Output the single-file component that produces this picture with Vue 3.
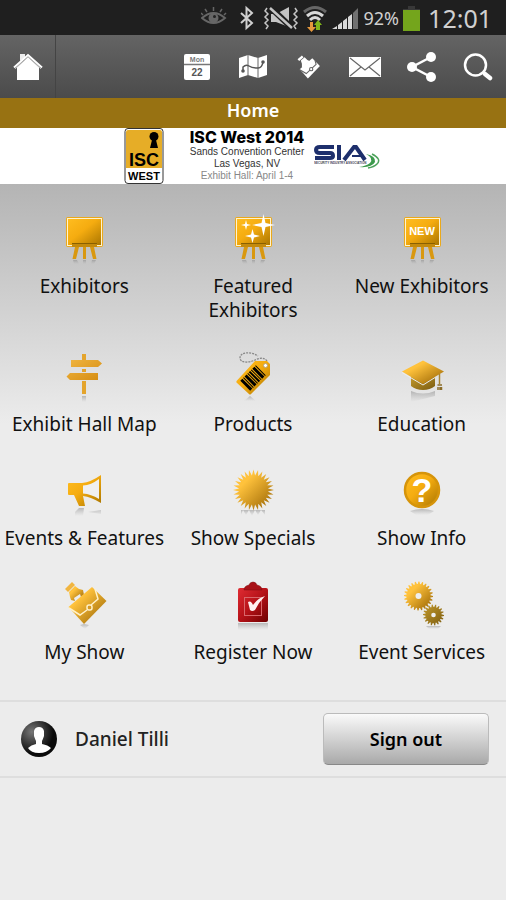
<template>
    <div class="app">
        <div class="status-bar">
            <svg width="30" height="26" viewBox="0 0 30 26">
                <path d="M1 13Q12.500 3 24 13Q12.500 23 1 13Z" fill="none" stroke="#666" stroke-width="2" />
                <circle cx="12.500" cy="13" r="5" fill="#666" />
                <circle cx="13.500" cy="11.500" r="1.500" fill="#222" />
                <path d="M12.500 6V2M6 7L4 4M19 7L21 4M2 10L0 8M23 10L25 8" stroke="#666" stroke-width="1.500" />
            </svg>
            <svg width="24" height="26" viewBox="0 0 24 26">
                <path d="M6 8L17 18L11.500 23V3L17 8L6 18" fill="none" stroke="#d0d0d0" stroke-width="2" />
            </svg>
            <svg width="36" height="26" viewBox="0 0 36 26">
                <path d="M8 9H13L26 2V22L13 17H8Z" fill="#c4c4c4" />
                <path d="M7 2L30 24" stroke="#1f1f1f" stroke-width="6" />
                <path d="M7 3L29 23" stroke="#c4c4c4" stroke-width="2.500" />
                <path d="M4 3L2 6L5 9L2 12L5 15L2 18L5 21L3 24M32 3L34 6L31 9L34 12L31 15L34 18L31 21L33 24" fill="none" stroke="#c4c4c4" stroke-width="1.500" />
            </svg>
            <svg width="25" height="28" viewBox="0 0 25 28">
                <g fill="none" stroke-width="3">
                    <path d="M1 8Q12 -1 23 8" stroke="#666" />
                    <path d="M4 12Q12 5 20 12M7 16Q12 11 17 16" stroke="#d8d8d8" />
                </g>
                <path d="M7 18H10V23H13L8.500 28L4 23H7Z" fill="#e5983c" />
                <path d="M13 26V21H11L15 16L19 21H17V26Z" fill="#7fb51a" />
            </svg>
            <svg width="28" height="24" viewBox="0 0 28 24">
                <path d="M0 23L5 20V23ZM6 23V19L10 16V23ZM11 23V15L15 12V23ZM16 23V11L20 8V23Z" fill="#d8d8d8" />
                <path d="M21 23V7L26 2V23Z" fill="#707070" />
            </svg>
            <span class="percent">92%</span>
            <svg width="17" height="26" viewBox="0 0 17 26">
                <path d="M5 1H12V4H17V9H0V4H5Z" fill="#383838" />
                <path d="M0 5H17V26H0Z" fill="#74a51c" />
            </svg>
            <span class="clock">12:01</span>
        </div>

        <nav class="toolbar">
            <button class="home" aria-label="Home">
                <svg width="32" height="30" viewBox="0 0 32 30">
                    <defs>
                        <linearGradient id="gold" x1="0" y1="0" x2="1" y2="1">
                            <stop offset="0" stop-color="#ffbd20" />
                            <stop offset="0.450" stop-color="#f5ac10" />
                            <stop offset="1" stop-color="#a87400" />
                        </linearGradient>
                        <linearGradient id="sand" x1="0" y1="0" x2="1" y2="1">
                            <stop offset="0.300" stop-color="#ffc23c" />
                            <stop offset="1" stop-color="#946000" />
                        </linearGradient>
                        <linearGradient id="sign" x1="0" y1="0" x2="1" y2="1">
                            <stop offset="0" stop-color="#f0b541" />
                            <stop offset="1" stop-color="#d58c10" />
                        </linearGradient>
                        <linearGradient id="olive" x1="0" y1="0" x2="1" y2="1">
                            <stop offset="0" stop-color="#c39a2c" />
                            <stop offset="1" stop-color="#7c5c10" />
                        </linearGradient>
                        <linearGradient id="red" x1="0" y1="0" x2="1" y2="1">
                            <stop offset="0" stop-color="#e02c33" />
                            <stop offset="0.500" stop-color="#b51218" />
                            <stop offset="1" stop-color="#6e0000" />
                        </linearGradient>
                        <linearGradient id="fade" x1="0" y1="0" x2="0" y2="1">
                            <stop offset="0" stop-color="#777" stop-opacity="0.450" />
                            <stop offset="1" stop-color="#999" stop-opacity="0" />
                        </linearGradient>
                        <radialGradient id="ball" cx="0.300" cy="0.300" r="0.600">
                            <stop offset="0" stop-color="#777" />
                            <stop offset="1" stop-color="#0a0a0a" />
                        </radialGradient>
                    </defs>
                    <path d="M8 9V2H13V6Z" fill="#eee" />
                    <path d="M16 5L27 15V28H5V15Z" fill="#fff" />
                    <path d="M3 17L16 5L29 17" fill="none" stroke="#bbb" />
                    <path d="M2 15.500L16 3L30 15.500" fill="none" stroke="#fff" stroke-width="2" />
                </svg>
            </button>
            <span class="spacer"></span>
            <button aria-label="Calendar">
                <svg width="28" height="28" viewBox="0 0 28 28">
                    <rect x="1" y="1" width="26" height="26" rx="2" fill="#fff" />
                    <path d="M1 11.500H27" stroke="#777" stroke-width="1.500" />
                    <text x="14" y="9" class="cal-day">Mon</text>
                    <text x="14" y="23" class="cal-date">22</text>
                </svg>
            </button>
            <button aria-label="Map">
                <svg width="30" height="28" viewBox="0 0 30 28">
                    <path d="M1 5L10 2L20 5L29 2V22L20 25L10 22L1 25Z" fill="#fff" />
                    <path d="M10 2V22M20 5V25" stroke="#666" />
                    <path d="M5 18V14Q8 11 11 13T20 15Q24 15 25 9" fill="none" stroke="#555" stroke-width="1.500" />
                    <circle cx="5" cy="18" r="1.800" fill="#555" />
                    <circle cx="25" cy="9" r="1.800" fill="#555" />
                </svg>
            </button>
            <button aria-label="My Show">
                <svg width="24" height="24" viewBox="4 1 44 44">
                    <path d="M5 9L13 2L16 5L8 12ZM11 11L18 5L23 10L27 12L28 16L24 15L18 21L18 25L13 23L13 17Z" fill="#fff" />
                    <path d="M32 7L46 21L24 44L9 27Z" fill="#fff" />
                    <path d="M9 28L21 35L39 18L37 11" fill="none" stroke="#666" stroke-width="2" />
                    <circle cx="30" cy="27" r="3" fill="#fff" stroke="#666" stroke-width="2" />
                </svg>
            </button>
            <button aria-label="Messages">
                <svg width="32" height="22" viewBox="0 0 32 22">
                    <rect x="0" y="1" width="32" height="20" fill="#fff" />
                    <path d="M1 2L16 14L31 2M1 20L12 11M31 20L20 11" fill="none" stroke="#666" stroke-width="1.200" />
                </svg>
            </button>
            <button aria-label="Share">
                <svg width="30" height="32" viewBox="0 0 30 32">
                    <path d="M24 6L5 16L24 26" fill="none" stroke="#fff" stroke-width="2.500" />
                    <circle cx="24" cy="6" r="5" fill="#fff" />
                    <circle cx="5" cy="16" r="5" fill="#fff" />
                    <circle cx="24" cy="26" r="5" fill="#fff" />
                </svg>
            </button>
            <button aria-label="Search">
                <svg width="30" height="30" viewBox="0 0 30 30">
                    <circle cx="12.500" cy="13" r="10.500" fill="none" stroke="#fff" stroke-width="2.500" />
                    <path d="M20 20L22 22" stroke="#fff" stroke-width="3" />
                    <path d="M22 22L27 26" stroke="#fff" stroke-width="4.500" stroke-linecap="round" />
                </svg>
            </button>
        </nav>

        <h1>Home</h1>

        <header class="banner">
            <svg width="40" height="56" viewBox="0 0 40 56">
                <rect x="1" y="0.500" width="38" height="55" rx="3" fill="#fff" stroke="#333" />
                <path d="M2 4Q2 2 4 2H36Q38 2 38 4V40H2Z" fill="#e6ad27" />
                <circle cx="30" cy="8.500" r="4.500" />
                <path d="M28.500 10H31.500L34 20H26Z" />
                <text x="20" y="38" class="logo-isc">ISC</text>
                <text x="20" y="52" class="logo-west">WEST</text>
            </svg>
            <div class="event">
                <strong>ISC West 2014</strong>
                <span>Sands Convention Center</span>
                <span>Las Vegas, NV</span>
                <span class="dates">Exhibit Hall: April 1-4</span>
            </div>
            <svg width="66" height="28" viewBox="0 0 66 28">
                <g fill="none" stroke="#1d2f6c" stroke-width="4">
                    <path d="M20 5H6Q2 5 2 8Q2 11 6 11H16Q19 11 19 14Q19 16 16 16H1" />
                    <path d="M25 3V18" />
                    <path d="M30 18L40 5H42L51 18" />
                    <path d="M38 14H48" stroke-width="2" />
                </g>
                <text x="0" y="22" class="sia-name">SECURITY INDUSTRY ASSOCIATION</text>
                <path d="M52 12Q60 16 56 21Q52 24 45 25Q58 26 61 20Q62 14 52 12Z" fill="#3c9a4c" />
                <path d="M58 12Q68 17 63 22Q60 25 54 26" fill="none" stroke="#4da35c" stroke-width="1.500" />
            </svg>
        </header>

        <main class="grid">
            <a v-for="item in items" :key="item.icon" href="#" class="tile">
                <svg width="48" height="50" viewBox="0 0 48 50">
                    <g v-if="item.icon.startsWith('board')">
                        <path d="M13 46H17L19 50H14ZM23 46H26V50H23ZM32 46H36L34 50H31Z" fill="url(#fade)" />
                        <path d="M15 33H19L16 45H12.500ZM23 33H26V45H23ZM30 33H34L36.500 45H33Z" fill="#d99810" />
                        <rect x="6" y="3" width="37" height="30" rx="2" fill="#eaa91b" />
                        <rect x="7.500" y="4.500" width="34" height="27" fill="url(#gold)" stroke="#fff3cf" />
                        <path d="M12 29H37V33H12Z" fill="#c48a0c" />
                        <path d="M12 29.500H37" stroke="#8a6000" />
                        <path v-if="item.icon === 'board-stars'" fill="#fff" d="M34.500 0L36.500 9L46 11L36.500 13L34.500 22L32.500 13L23 11L32.500 9ZM17 6L18 10L22 11L18 12L17 16L16 12L12 11L16 10ZM23.500 15L25 20.500L31 22L25 23.500L23.500 29L22 23.500L16 22L22 20.500Z" />
                        <text v-if="item.icon === 'board-new'" x="24" y="21" class="new">NEW</text>
                    </g>
                    <g v-else-if="item.icon === 'sign'">
                        <path d="M22 2H26V8H22ZM22 17H26V20H22ZM22 29H26V42H22Z" fill="#e4a42c" />
                        <path d="M11 8H38L42 11.500L38 15H11ZM38 21H10L6.500 24.500L10 28H38Z" fill="url(#sign)" />
                        <path d="M22 44H26V50H22Z" fill="url(#fade)" />
                    </g>
                    <g v-else-if="item.icon === 'tag'">
                        <path d="M38 9C35 5 30 6 26 8C20 11 11 11 11 6C11 0 22 -1 29 4" fill="none" stroke="#888" stroke-width="1.300" stroke-dasharray="2 1" />
                        <path d="M21 44L15 49H27Z" fill="url(#fade)" />
                        <path d="M26 9H38L41 12V23L22 42Q21 43 20 42L7.500 30.500Q7 29.500 8 28.500Z" fill="url(#gold)" />
                        <circle cx="36.500" cy="13.500" r="2" fill="#fff" stroke="#b9a375" />
                        <path transform="translate(24 26) rotate(-45)" d="M-11 -7H-8V7H-11ZM-7 -7H-6V7H-7ZM-5 -7H-2V7H-5ZM-1 -7H0V7H-1ZM1 -7H3V7H1ZM4 -7H5V7H4ZM6 -7H9V7H6ZM10 -7H11V7H10Z" />
                    </g>
                    <g v-else-if="item.icon === 'cap'">
                        <path d="M13 39Q25 44 37 39V44L25 47L13 50Z" fill="url(#fade)" />
                        <path d="M13 24V34Q18 38 25 38T37 34V24Z" fill="url(#olive)" />
                        <path d="M25 8.500L46 19.500L25 32L4 19.500Z" fill="url(#sand)" />
                        <path d="M4 20.500L25 33L37 25.500" fill="none" stroke="#eee" />
                        <path d="M41.500 22V32" stroke="#a88430" stroke-width="1.500" />
                        <path d="M39.500 33H44M40 35V38M42 35V38M43.500 35V38" stroke="#8b6c28" stroke-width="1.500" />
                    </g>
                    <g v-else-if="item.icon === 'horn'">
                        <path d="M15 46L19 42H24L23 50H15ZM28 46L41 44V48Z" fill="url(#fade)" />
                        <path d="M9 17H22Q31 16 41 9V37Q31 31 23 30L25 40H19L14 29H9Q8 29 8 28V18Q8 17 9 17Z" fill="url(#gold)" />
                        <path d="M23 19.500V27.500Q31 28 39 33V13Q31 19 23 19.500Z" fill="#f0f0f0" />
                    </g>
                    <g v-else-if="item.icon === 'sun'">
                        <path d="M12 49L14 44L17 49L20 44L23 50L26 44L29 49L32 44L36 49V44H12Z" fill="url(#fade)" />
                        <polygon :points="star(24.5, 24, 20.5, 14.5, 28)" fill="url(#sand)" />
                    </g>
                    <g v-else-if="item.icon === 'help'">
                        <path d="M12 45Q24 41 36 45L30 49H18Z" fill="url(#fade)" />
                        <circle cx="24" cy="24" r="17" fill="url(#gold)" stroke="#d6940a" stroke-width="2.500" />
                        <text x="24" y="36" class="question">?</text>
                    </g>
                    <g v-else-if="item.icon === 'case'">
                        <path d="M24 44L20 45L25 49L29 45Z" fill="url(#fade)" />
                        <path d="M5 9L12 2L15 5L8 12Z" fill="#f1b540" />
                        <path d="M9 12L15 6L19 9L23 10L24 15L21 17L20 14L14 18L15 21L11 20L10 17Z" fill="url(#sand)" />
                        <path d="M32 7L46.500 21L24 44L8.500 27Z" fill="url(#sand)" />
                        <path d="M9 28L20 35L27 30M31 25L38 19L35 9" fill="none" stroke="#fff1c8" stroke-width="1.500" />
                        <rect x="27" y="25" width="5" height="5" rx="2" fill="#d79a24" stroke="#fff1c8" stroke-width="1.500" />
                    </g>
                    <g v-else-if="item.icon === 'clipboard'">
                        <path d="M9 43H39V50H9Z" fill="url(#fade)" />
                        <rect x="9" y="8" width="30" height="34" rx="2" fill="url(#red)" />
                        <path d="M15 10Q15 6 20 5Q21 2 24 2T28 5Q33 6 33 10Z" fill="#a81016" stroke="#7c0a0e" stroke-width="0.500" />
                        <rect x="15.500" y="17.500" width="17" height="18" fill="none" stroke="#d9666a" />
                        <path d="M19 22Q22 20 24 25Q29 18 36 16Q30 22 26 30Q23 32 21 30Z" fill="#fff0f0" />
                    </g>
                    <g v-else>
                        <path d="M28 46H43L40 49H31Z" fill="url(#fade)" />
                        <polygon :points="gear(20.5, 16, 14.5, 12, 24)" fill="url(#sand)" />
                        <circle cx="20.500" cy="16" r="3" fill="#eee" />
                        <polygon :points="gear(35.500, 35, 10.500, 8, 18)" fill="url(#olive)" />
                        <circle cx="35.500" cy="35" r="2.300" fill="#eee" />
                    </g>
                </svg>
                <span class="label">{{ item.label }}</span>
            </a>
        </main>

        <section class="account">
            <svg width="36" height="36" viewBox="0 0 36 36">
                <circle cx="18" cy="18" r="18" fill="url(#ball)" />
                <path d="M13 10Q14 6 18 6T23 10V15Q22 18 21 20V23Q27 24 30 27Q26 32 18 32T7 27Q10 24 15 23V20Q14 18 13 15Z" fill="#fff" />
            </svg>
            <span class="user">Daniel Tilli</span>
            <button class="sign-out">Sign out</button>
        </section>
    </div>
</template>

<script setup>
const items = [
    { icon: 'board', label: 'Exhibitors' },
    { icon: 'board-stars', label: 'Featured Exhibitors' },
    { icon: 'board-new', label: 'New Exhibitors' },
    { icon: 'sign', label: 'Exhibit Hall Map' },
    { icon: 'tag', label: 'Products' },
    { icon: 'cap', label: 'Education' },
    { icon: 'horn', label: 'Events & Features' },
    { icon: 'sun', label: 'Show Specials' },
    { icon: 'help', label: 'Show Info' },
    { icon: 'case', label: 'My Show' },
    { icon: 'clipboard', label: 'Register Now' },
    { icon: 'gears', label: 'Event Services' }
]

const point = (cx, cy, r, angle) =>
    `${(cx + r * Math.cos(angle)).toFixed(2)},${(cy + r * Math.sin(angle)).toFixed(2)}`

// Pointed rays around a disc
const star = (cx, cy, outer, inner, count) => {
    const points = []
    for (let i = 0; i < count * 2; i++) {
        points.push(point(cx, cy, i % 2 ? inner : outer, (i * Math.PI) / count))
    }
    return points.join(' ')
}

// Square teeth around a disc
const gear = (cx, cy, outer, inner, count) => {
    const points = []
    for (let i = 0; i < count * 4; i++) {
        points.push(point(cx, cy, i % 4 < 2 ? outer : inner, (i * Math.PI) / count / 2))
    }
    return points.join(' ')
}
</script>

<style>
body {
    background: #ececec;
}
</style>

<style scoped>
.app {
    font-family: "Noto Sans", "Open Sans", sans-serif;
    color: #111;
}

button {
    border: 0;
    padding: 0;
    background: none;
    font-family: inherit;
    cursor: pointer;
}

.status-bar {
    display: flex;
    align-items: center;
    justify-content: flex-end;
    gap: 4px;
    height: 35px;
    padding: 0 14px;
    background: #1f1f1f;
    color: #d0d0d0;
}

.percent {
    font-size: 18px;
}

.clock {
    margin-left: 4px;
    font-size: 25px;
}

.toolbar {
    display: grid;
    grid-template-columns: repeat(9, 1fr);
    height: 63px;
    background: linear-gradient(#646464, #4b4b4b);
}

.toolbar button {
    display: flex;
    align-items: center;
    justify-content: center;
}

.toolbar .home {
    border-right: 1px solid #444;
}

.spacer {
    grid-column: span 2;
}

text {
    text-anchor: middle;
    font-family: "Liberation Sans", Arial, sans-serif;
    font-weight: bold;
}

.cal-day {
    font-size: 7px;
    fill: #777;
}

.cal-date {
    font-size: 10px;
    fill: #555;
}

h1 {
    margin: 0;
    height: 30px;
    background: #987212;
    color: #fff;
    font-size: 18px;
    font-weight: 600;
    line-height: 25px;
    text-align: center;
}

.banner {
    display: flex;
    align-items: center;
    justify-content: center;
    height: 56px;
    padding-right: 2px;
    background: #fff;
}

.logo-isc {
    font-size: 18px;
}

.logo-west {
    font-size: 11px;
}

.sia-name {
    text-anchor: start;
    font-size: 3px;
    fill: #445;
}

.event {
    display: flex;
    flex-direction: column;
    margin: 0 10px 0 26px;
    font-family: "Liberation Sans", Arial, sans-serif;
    font-size: 10px;
    line-height: 12px;
    text-align: center;
    color: #333;
}

.event strong {
    margin-bottom: 2px;
    font-family: Inter, sans-serif;
    font-size: 16px;
    font-weight: 800;
    line-height: 14px;
    color: #000;
}

.event .dates {
    color: #888;
}

.grid {
    display: grid;
    grid-template-columns: repeat(3, 1fr);
    row-gap: 30px;
    padding: 30px 0 36px;
    background: linear-gradient(#b4b4b4, #ececec 240px);
}

.tile {
    display: flex;
    flex-direction: column;
    align-items: center;
    gap: 10px;
    color: #111;
    text-decoration: none;
}

.label {
    max-width: 164px;
    font-size: 19px;
    line-height: 24px;
    text-align: center;
}

.new {
    font-size: 11px;
    fill: #fff;
}

.question {
    font-size: 34px;
    fill: #fff;
}

.account {
    display: flex;
    align-items: center;
    gap: 18px;
    height: 74px;
    padding: 0 17px 0 21px;
    border-top: 2px solid #dedede;
    border-bottom: 2px solid #dedede;
}

.user {
    flex: 1;
    font-size: 19px;
    font-weight: 500;
    color: #222;
}

.sign-out {
    width: 166px;
    height: 52px;
    border: 1px solid #bbb;
    border-bottom-color: #888;
    border-radius: 5px;
    background: linear-gradient(#fafafa, #a9a9a9);
    font-size: 18px;
    font-weight: 600;
    color: #000;
}
</style>
